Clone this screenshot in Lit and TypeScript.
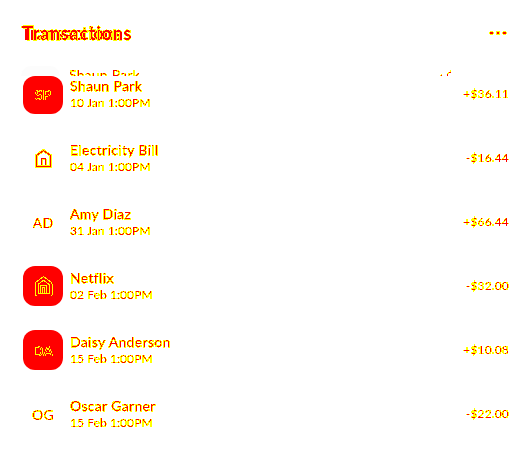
import { LitElement, html, css } from "lit";
import { customElement } from "lit/decorators.js";

interface Row { name: string; date: string; amount: string; initials?: string; solid?: boolean; }

const rows: Row[] = [
  { name: "Shaun Park", date: "10 Jan 1:00PM", amount: "+$36.11", initials: "SP", solid: true },
  { name: "Electricity Bill", date: "04 Jan 1:00PM", amount: "-$16.44" },
  { name: "Amy Diaz", date: "31 Jan 1:00PM", amount: "+$66.44", initials: "AD" },
  { name: "Netflix", date: "02 Feb 1:00PM", amount: "-$32.00", solid: true },
  { name: "Daisy Anderson", date: "15 Feb 1:00PM", amount: "+$10.08", initials: "DA", solid: true },
  { name: "Oscar Garner", date: "15 Feb 1:00PM", amount: "-$22.00", initials: "OG" },
];

@customElement("app-root")
export class AppRoot extends LitElement {
  static styles = css`
    :host { display: block; box-sizing: border-box; width: 532px; height: 458px; background: #fff; color: #f00; font-family: Lato, "Open Sans", sans-serif; overflow: hidden; }
    .defs { position: absolute; width: 0; height: 0; }
    .head { display: flex; justify-content: space-between; align-items: center; height: 66px; padding: 0 24px 0 21px; }
    .title { display: grid; margin: 0 0 1px; font-size: 18px; line-height: 24px; font-weight: 700; }
    .title span { grid-area: 1 / 1; filter: url(#edge); }
    .title .front { padding-left: 2px; letter-spacing: 0.75px; -webkit-text-stroke: 0.3px #f00; }
    .dots { margin-bottom: 1px; }
    .ghost { display: flex; height: 10px; padding: 0 80px 0 21px; overflow: hidden; }
    .patch { width: 39px; border-radius: 10px 10px 0 0; background: #fcfcfc; }
    .ghost-name { margin-left: 9px; flex: 1; font-size: 14px; line-height: 18px; letter-spacing: 0.2px; filter: url(#fine); }
    .spark { width: 12px; height: 10px; }
    .list { display: block; margin-top: -2px; }
    .row { display: flex; align-items: center; height: 40px; margin-bottom: 24px; padding: 0 23px; }
    .tile { display: flex; align-items: center; justify-content: center; box-sizing: border-box; width: 40px; height: 40px; border-radius: 12px; font-size: 14px; }
    .row:first-child .tile { height: 38px; margin-top: 2px; padding-bottom: 2px; }
    .solid { background: #f00; }
    .mark { letter-spacing: 0.2px; filter: url(#edge); }
    .solid .mark { font-size: 14px; font-weight: 700; filter: url(#rim); }
    .text { margin-left: 7px; flex: 1; }
    .name { font-size: 14px; line-height: 18px; letter-spacing: 0.33px; -webkit-text-stroke: 0.25px #f00; filter: url(#edge); }
    .date { font-size: 12px; line-height: 16px; letter-spacing: 0.08px; filter: url(#fine); }
    .amount { font-size: 12px; margin-bottom: 2px; letter-spacing: 0.16px; filter: url(#fine); }
    svg { display: block; }
  `;

  house(solid?: boolean) {
    return html`<svg width="20" height="20" viewBox="0 0 20 20" fill="none" stroke-linejoin="round" shape-rendering="crispEdges">
      <path d="M3.5 18.5V7.5L10.5 2.5L17.5 7.5V18.5Z" stroke="#ff0" stroke-width="${solid ? 4 : 3}"/>
      <path d="M8.5 16.5V10.5H12.5V16.5" stroke="#ff0" stroke-width="${solid ? 3 : 2}"/>
      <path d="M3.5 18.5V7.5L10.5 2.5L17.5 7.5V18.5Z" stroke="#f00" stroke-width="${solid ? 2 : 1}"/>
      <path d="M8.5 16.5V10.5H12.5V16.5" stroke="#f00" stroke-width="1"/>
    </svg>`;
  }

  render() {
    return html`
      <svg class="defs">
        <filter id="edge" color-interpolation-filters="sRGB">
          <feColorMatrix values="0 0 0 0 1  0 0 0 1 0  0 0 0 0 0  0 0 0 1 0"/>
          <feComponentTransfer><feFuncG type="discrete" tableValues="1 1 1 1 1 1 1 1 0 0"/><feFuncA type="discrete" tableValues="0 1 1 1 1 1 1 1 1 1 1 1 1 1 1 1 1 1 1 1"/></feComponentTransfer>
        </filter>
        <filter id="fine" color-interpolation-filters="sRGB">
          <feColorMatrix values="0 0 0 0 1  0 0 0 1 0  0 0 0 0 0  0 0 0 1 0"/>
          <feComponentTransfer><feFuncG type="discrete" tableValues="1 1 1 1 1 1 1 1 0 0"/><feFuncA type="discrete" tableValues="0 1 1 1 1 1 1 1 1 1 1 1"/></feComponentTransfer>
        </filter>
        <filter id="rim" color-interpolation-filters="sRGB">
          <feColorMatrix values="0 0 0 0 1  0 0 0 1 0  0 0 0 0 0  0 0 0 1 0"/>
          <feComponentTransfer><feFuncG type="discrete" tableValues="1 1 1 1 1 1 1 1 1 0"/><feFuncA type="discrete" tableValues="0 0 1 1 1 1 1 1 1 1"/></feComponentTransfer>
        </filter>
      </svg>
      <div class="head">
        <h1 class="title"><span aria-hidden="true">Transactions</span><span class="front">Transactions</span></h1>
        <svg class="dots" width="19" height="4" viewBox="0 0 19 4" shape-rendering="crispEdges"><path d="M0 1h5v2H0zM1 0h3v4H1zM7 0h4v4H7zM13 1h5v2h-5zM14 0h3v4h-3z" fill="#ff0"/><path d="M1 1h3v2H1zM8 1h2v2H8zM14 1h3v2h-3z" fill="#f00"/></svg>
      </div>
      <div class="ghost">
        <span class="patch"></span><span class="ghost-name">Shaun Park</span>
        <svg class="spark" viewBox="0 0 12 10" shape-rendering="crispEdges"><path d="M0 9h1v1H0zM1 8h1v1H1zM7 7h1v3H7zM8 6h1v2H8zM10 4h1v2h-1z" fill="#ff0"/><path d="M1 9h1v1H1zM7 8h1v2H7zM9 6h2v1H9z" fill="#f00"/></svg>
      </div>
      <div class="list">${rows.map(r => html`<div class="row">
        <div class="tile ${r.solid ? "solid" : ""}">${r.initials ? html`<span class="mark">${r.initials}</span>` : this.house(r.solid)}</div>
        <div class="text"><div class="name">${r.name}</div><div class="date">${r.date}</div></div>
        <div class="amount">${r.amount}</div></div>`)}</div>`;
  }
}
